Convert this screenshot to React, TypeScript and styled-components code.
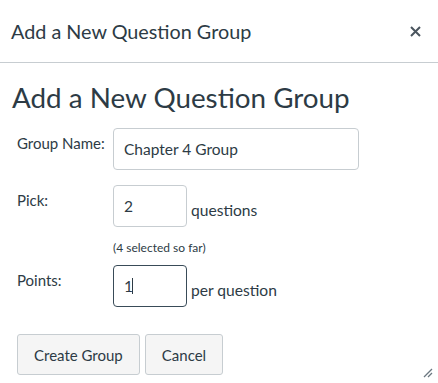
import styled, { createGlobalStyle } from "styled-components";

const GlobalStyle = createGlobalStyle`
  html, body {
    margin: 0;
    padding: 0;
    background: #ffffff;
  }
  body {
    font-family: Lato, "Liberation Sans", sans-serif;
    color: #2d3b45;
  }
`;

const Dialog = styled.div`
  position: relative;
  width: 438px;
  height: 383px;
  background: #ffffff;
  overflow: hidden;
`;

const Header = styled.div`
  height: 63px;
  display: flex;
  align-items: center;
  justify-content: space-between;
  padding: 0 16px 0 11px;
  border-bottom: 1px solid #c7cdd1;
  box-sizing: border-box;
`;

const HeaderTitle = styled.h2`
  margin: 0;
  font-size: 19.8px;
  font-weight: 400;
  color: #2d3b45;
`;

const CloseButton = styled.button`
  border: none;
  background: none;
  padding: 0;
  width: 14px;
  height: 14px;
  display: flex;
  align-items: center;
  justify-content: center;
  cursor: pointer;
`;

const Body = styled.div`
  padding: 18px 12px 0;
`;

const Heading = styled.h1`
  margin: 0 0 13px;
  font-size: 27.8px;
  font-weight: 400;
  line-height: 34px;
  color: #2d3b45;
`;

const Form = styled.form`
  display: grid;
  grid-template-columns: 96px auto;
  padding-left: 5px;
`;

const Label = styled.label`
  font-size: 15px;
  line-height: 18px;
  padding-top: 6px;
  color: #2d3b45;
`;

const Field = styled.div<{ $gap?: number }>`
  display: flex;
  align-items: flex-end;
  gap: 4px;
  margin-bottom: ${(p) => p.$gap ?? 15}px;
`;

const InputBox = styled.div`
  position: relative;
`;

const Input = styled.input<{ $width: number; $focused?: boolean }>`
  box-sizing: border-box;
  width: ${(p) => p.$width}px;
  height: 42px;
  padding: 0 10px;
  font-family: Lato, "Liberation Sans", sans-serif;
  font-size: 15.5px;
  color: #2d3b45;
  border: 1px solid ${(p) => (p.$focused ? "#394b58" : "#c7cdd1")};
  border-radius: 4px;
  background: #ffffff;
  outline: none;
`;

const Caret = styled.span`
  position: absolute;
  left: 19px;
  top: 13px;
  width: 1px;
  height: 16px;
  background: #2d3b45;
`;

const Suffix = styled.span`
  font-size: 15.6px;
  line-height: 18px;
  padding-bottom: 8px;
`;

const Hint = styled.div`
  grid-column: 2;
  font-size: 12px;
  line-height: 14px;
  margin: 14px 0 10px;
  color: #2d3b45;
`;

const Actions = styled.div`
  display: flex;
  gap: 5px;
  padding: 27px 0 0 5px;
`;

const Button = styled.button`
  height: 41px;
  padding: 0 16px;
  font-family: Lato, "Liberation Sans", sans-serif;
  font-size: 15px;
  color: #2d3b45;
  background: #f5f5f5;
  border: 1px solid #c7cdd1;
  border-radius: 3px;
  cursor: pointer;
`;

const Grip = styled.svg`
  position: absolute;
  right: 5px;
  bottom: 5px;
`;

export default function App() {
  return (
    <>
      <GlobalStyle />
      <Dialog>
        <Header>
          <HeaderTitle>Add a New Question Group</HeaderTitle>
          <CloseButton aria-label="Close">
            <svg width="11" height="11" viewBox="0 0 11 11">
              <path d="M1 1 L10 10 M10 1 L1 10" stroke="#4a555e" strokeWidth="2" />
            </svg>
          </CloseButton>
        </Header>
        <Body>
          <Heading>Add a New Question Group</Heading>
          <Form onSubmit={(e) => e.preventDefault()}>
            <Label htmlFor="group-name">Group Name:</Label>
            <Field>
              <Input id="group-name" $width={246} defaultValue="Chapter 4 Group" />
            </Field>

            <Label htmlFor="pick">Pick:</Label>
            <Field $gap={0}>
              <Input id="pick" $width={74} defaultValue="2" />
              <Suffix>questions</Suffix>
            </Field>
            <Hint>(4 selected so far)</Hint>

            <Label htmlFor="points">Points:</Label>
            <Field $gap={0}>
              <InputBox>
                <Input id="points" $width={74} $focused defaultValue="1" />
                <Caret />
              </InputBox>
              <Suffix>per question</Suffix>
            </Field>
          </Form>
          <Actions>
            <Button type="button">Create Group</Button>
            <Button type="button">Cancel</Button>
          </Actions>
        </Body>
        <Grip width="12" height="12" viewBox="0 0 12 12">
          <path d="M11 3 L3 11 M11 7 L7 11" stroke="#6b7780" strokeWidth="1.3" />
        </Grip>
      </Dialog>
    </>
  );
}
